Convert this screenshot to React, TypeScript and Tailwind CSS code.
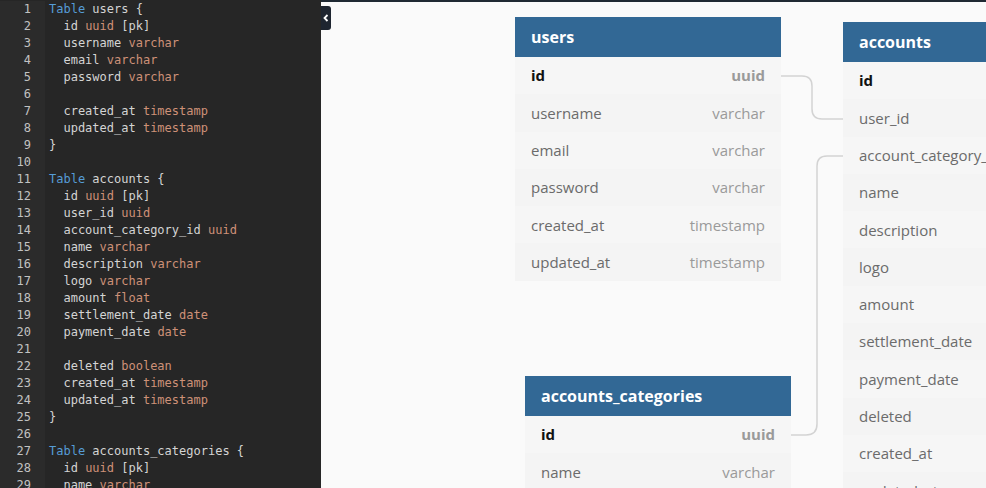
import React from 'react';

const codeLines = [
  'Table users {',
  '  id uuid [pk]',
  '  username varchar',
  '  email varchar',
  '  password varchar',
  '',
  '  created_at timestamp',
  '  updated_at timestamp',
  '}',
  '',
  'Table accounts {',
  '  id uuid [pk]',
  '  user_id uuid',
  '  account_category_id uuid',
  '  name varchar',
  '  description varchar',
  '  logo varchar',
  '  amount float',
  '  settlement_date date',
  '  payment_date date',
  '',
  '  deleted boolean',
  '  created_at timestamp',
  '  updated_at timestamp',
  '}',
  '',
  'Table accounts_categories {',
  '  id uuid [pk]',
  '  name varchar',
];

const CodeLine = ({ text }: { text: string }) => {
  if (text.startsWith('Table ')) {
    return (
      <>
        <span className="text-[#569cd6]">Table</span>
        {text.slice(5)}
      </>
    );
  }
  if (text.startsWith('  ')) {
    const [name, type, ...rest] = text.trim().split(' ');
    return (
      <>
        {'  ' + name + ' '}
        <span className="text-[#ce9178]">{type}</span>
        {rest.length ? ' ' + rest.join(' ') : ''}
      </>
    );
  }
  return <>{text}</>;
};

type Field = { name: string; type: string; pk?: boolean };

const users: Field[] = [
  { name: 'id', type: 'uuid', pk: true },
  { name: 'username', type: 'varchar' },
  { name: 'email', type: 'varchar' },
  { name: 'password', type: 'varchar' },
  { name: 'created_at', type: 'timestamp' },
  { name: 'updated_at', type: 'timestamp' },
];

const accounts: Field[] = [
  { name: 'id', type: 'uuid', pk: true },
  { name: 'user_id', type: 'uuid' },
  { name: 'account_category_id', type: 'uuid' },
  { name: 'name', type: 'varchar' },
  { name: 'description', type: 'varchar' },
  { name: 'logo', type: 'varchar' },
  { name: 'amount', type: 'float' },
  { name: 'settlement_date', type: 'date' },
  { name: 'payment_date', type: 'date' },
  { name: 'deleted', type: 'boolean' },
  { name: 'created_at', type: 'timestamp' },
  { name: 'updated_at', type: 'timestamp' },
];

const categories: Field[] = [
  { name: 'id', type: 'uuid', pk: true },
  { name: 'name', type: 'varchar' },
];

const TableNode = ({ title, fields, className }: { title: string; fields: Field[]; className: string }) => (
  <div className={'absolute w-[266px] ' + className}>
    <div className="h-10 bg-[#326895] px-4 flex items-center text-white font-bold text-[16px]">{title}</div>
    {fields.map((f, i) => (
      <div
        key={f.name}
        className={
          'h-[37.3px] px-4 flex items-center justify-between text-[15px] ' +
          (i % 2 === 0 ? 'bg-[#f6f6f6]' : 'bg-[#f4f4f4]')
        }
      >
        <span className={f.pk ? 'font-bold text-[#111]' : 'text-[#6b6b6b]'}>{f.name}</span>
        <span className={f.pk ? 'font-bold text-[#9a9a9a]' : 'text-[#9a9a9a]'}>{f.type}</span>
      </div>
    ))}
  </div>
);

export default function App() {
  return (
    <div className="flex w-[986px] h-[488px] overflow-hidden">
      {/* editor */}
      <div className="w-[321px] h-full flex bg-[#262626] font-['DejaVu_Sans_Mono',monospace] text-[12px] leading-[17px] shrink-0 pt-px">
        <div className="w-[45px] bg-[#2b2b2b] text-[#c2c2c2] text-right pr-[14px]">
          {codeLines.map((_, i) => (
            <div key={i}>{i + 1}</div>
          ))}
        </div>
        <div className="pl-1 text-[#d4d4d4] whitespace-pre">
          {codeLines.map((l, i) => (
            <div key={i} className="h-[17px]">
              <CodeLine text={l} />
            </div>
          ))}
        </div>
      </div>

      {/* diagram canvas */}
      <div className="relative flex-1 h-full bg-[#fafafa] overflow-hidden font-['Open_Sans',sans-serif] border-t-2 border-[#1f2933]">
        <div className="absolute left-0 top-[4px] w-[10px] h-[24px] bg-[#1e2530] rounded-r-[3px] flex items-center justify-center">
          <svg width="6" height="8" viewBox="0 0 6 8">
            <path d="M4.5 1 L1.5 4 L4.5 7" stroke="white" strokeWidth="1.8" fill="none" />
          </svg>
        </div>

        <svg className="absolute left-0 top-[-2px]" width="665" height="488">
          <path d="M460 76 H481 Q491 76 491 86 V109 Q491 119 501 119 H522" stroke="#d3d3d3" strokeWidth="1.5" fill="none" />
          <path d="M470 435 H485 Q496 435 496 424 V166 Q496 156 506 156 H522" stroke="#d3d3d3" strokeWidth="1.5" fill="none" />
        </svg>

        <TableNode title="users" fields={users} className="left-[194px] top-[15px]" />
        <TableNode title="accounts" fields={accounts} className="left-[522px] top-[20px]" />
        <TableNode title="accounts_categories" fields={categories} className="left-[204px] top-[374px]" />
      </div>
    </div>
  );
}
